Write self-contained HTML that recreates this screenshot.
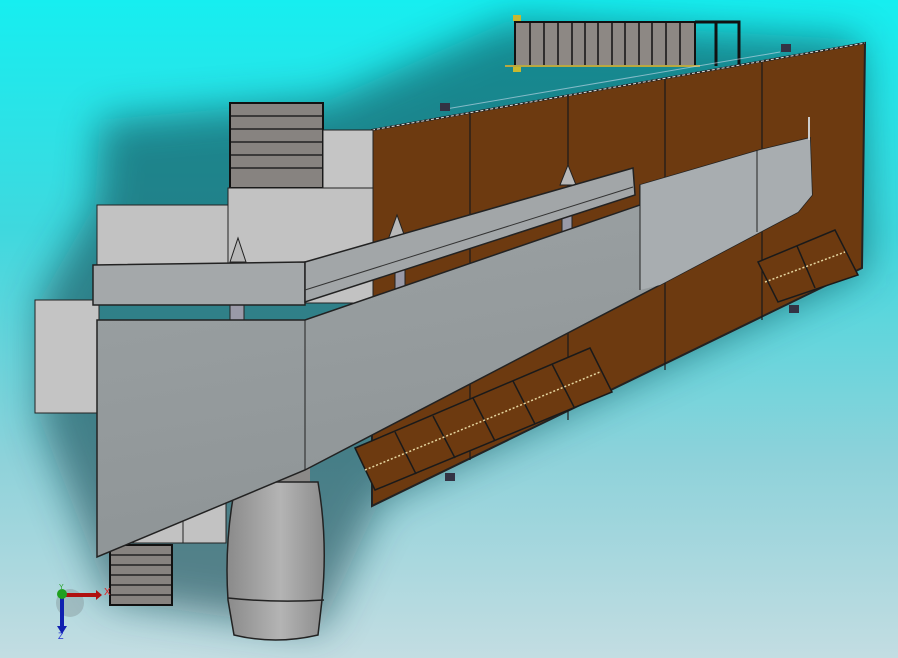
<!DOCTYPE html>
<html><head><style>
html,body{margin:0;padding:0;width:898px;height:658px;overflow:hidden}
body{background:linear-gradient(180deg,#16eef0 0%,#3fd8de 35%,#8ed2da 70%,#c3dde2 100%)}
</style></head><body>
<svg width="898" height="658" viewBox="0 0 898 658" xmlns="http://www.w3.org/2000/svg" style="position:absolute;left:0;top:0">
<defs>
<filter id="b" x="-30%" y="-30%" width="160%" height="160%"><feGaussianBlur stdDeviation="20"/></filter>
<linearGradient id="eng" x1="0" x2="1"><stop offset="0" stop-color="#8a8a8a"/><stop offset=".55" stop-color="#b4b4b4"/><stop offset="1" stop-color="#8c8c8c"/></linearGradient>
<linearGradient id="wing" x1="0" y1="0" x2="0.3" y2="1"><stop offset="0" stop-color="#9ea4a6"/><stop offset="1" stop-color="#8e9496"/></linearGradient>
</defs>
<!-- shadow -->
<g filter="url(#b)" opacity=".55">
<polygon points="100,120 330,100 510,20 860,40 865,270 380,500 320,630 110,600 40,420 40,300 95,205" fill="#0c3a44"/>
</g>
<!-- top gangway -->
<rect x="515" y="22" width="180" height="44" fill="#8d8884" stroke="#111" stroke-width="2"/>
<g stroke="#111" stroke-width="1.5">
<line x1="530" y1="23" x2="530" y2="65"/><line x1="544" y1="23" x2="544" y2="65"/><line x1="558" y1="23" x2="558" y2="65"/><line x1="572" y1="23" x2="572" y2="65"/><line x1="585" y1="23" x2="585" y2="65"/><line x1="598" y1="23" x2="598" y2="65"/><line x1="612" y1="23" x2="612" y2="65"/><line x1="625" y1="23" x2="625" y2="65"/><line x1="639" y1="23" x2="639" y2="65"/><line x1="652" y1="23" x2="652" y2="65"/><line x1="666" y1="23" x2="666" y2="65"/><line x1="680" y1="23" x2="680" y2="65"/>
</g>
<path d="M695 22 H739 V66 M716 22 V66" fill="none" stroke="#111" stroke-width="3"/>
<rect x="513" y="15" width="8" height="6" fill="#c8b830"/><rect x="513" y="66" width="8" height="6" fill="#c8b830"/>
<line x1="505" y1="66" x2="700" y2="66" stroke="#b8a840" stroke-width="2"/>
<!-- brown deck -->
<polygon points="372,130 865,43 862,268 372,506" fill="#6d3a10" stroke="#222" stroke-width="2"/>
<polyline points="372,130 865,43" fill="none" stroke="#ddd" stroke-width="1" stroke-dasharray="3,2"/>
<g stroke="#1a1a1a" stroke-width="1.2">
<line x1="470" y1="113" x2="470" y2="460"/><line x1="568" y1="96" x2="568" y2="420"/><line x1="665" y1="79" x2="665" y2="370"/><line x1="762" y1="62" x2="762" y2="320"/>
</g>
<line x1="440" y1="110" x2="780" y2="52" stroke="#cde" stroke-width="1" opacity=".6"/>
<!-- upper left stairs -->
<rect x="230" y="103" width="93" height="85" fill="#878380" stroke="#111" stroke-width="2"/>
<g stroke="#222" stroke-width="1.5"><line x1="231" y1="116" x2="322" y2="116"/><line x1="231" y1="129" x2="322" y2="129"/><line x1="231" y1="142" x2="322" y2="142"/><line x1="231" y1="155" x2="322" y2="155"/><line x1="231" y1="168" x2="322" y2="168"/></g>
<!-- gray blocks -->
<rect x="323" y="130" width="50" height="60" fill="#c5c5c5" stroke="#222"/>
<rect x="228" y="188" width="145" height="115" fill="#c2c2c2" stroke="#222"/>
<rect x="97" y="205" width="131" height="100" fill="#c2c2c2" stroke="#222"/>
<rect x="35" y="300" width="64" height="113" fill="#c4c4c4" stroke="#222"/>
<!-- posts -->
<rect x="395" y="260" width="10" height="40" fill="#9a9aa8" stroke="#222"/>
<rect x="562" y="205" width="10" height="35" fill="#9a9aa8" stroke="#222"/>
<rect x="230" y="300" width="14" height="20" fill="#9a9aa8" stroke="#222"/>
<!-- fins -->
<path d="M388 240 L397 215 L406 240 Z" fill="#b8b8b8" stroke="#222"/>
<path d="M560 185 L568 165 L576 185 Z" fill="#b8b8b8" stroke="#222"/>
<path d="M230 262 L238 238 L246 262 Z" fill="#b8b8b8" stroke="#222"/>
<!-- plank -->
<polygon points="93,265 305,262 305,305 93,305" fill="#a4a8aa" stroke="#222" stroke-width="1.5"/>
<polygon points="305,262 633,168 635,195 305,302" fill="#a2a6a8" stroke="#222" stroke-width="1.5"/>
<line x1="305" y1="290" x2="633" y2="187" stroke="#333"/>
<!-- bottom stairs -->
<rect x="110" y="545" width="62" height="60" fill="#878380" stroke="#111" stroke-width="2"/>
<g stroke="#222" stroke-width="1.5"><line x1="111" y1="555" x2="171" y2="555"/><line x1="111" y1="565" x2="171" y2="565"/><line x1="111" y1="575" x2="171" y2="575"/><line x1="111" y1="585" x2="171" y2="585"/><line x1="111" y1="595" x2="171" y2="595"/></g>
<rect x="130" y="480" width="96" height="63" fill="#c2c2c2" stroke="#222"/>
<line x1="183" y1="480" x2="183" y2="543" stroke="#222"/>
<!-- engine -->
<rect x="265" y="455" width="45" height="40" fill="#8c8a88"/>
<path d="M236 482 H318 Q328 540 322 600 L318 635 Q275 645 234 635 L228 600 Q224 540 236 482 Z" fill="url(#eng)" stroke="#222" stroke-width="1.5"/>
<path d="M228 598 Q275 603 324 600" fill="none" stroke="#222" stroke-width="1.5"/>
<!-- main wing -->
<polygon points="97,320 305,320 640,205 640,185 760,150 810,138 812,195 798,212 660,285 305,470 97,557" fill="url(#wing)" stroke="#222" stroke-width="1.5"/>
<polygon points="640,185 760,150 810,138 812,195 798,212 660,285 640,290" fill="#a8adb0"/>
<line x1="640" y1="185" x2="640" y2="290" stroke="#222"/>
<line x1="757" y1="150" x2="757" y2="232" stroke="#222"/>
<line x1="305" y1="320" x2="305" y2="470" stroke="#222"/>
<line x1="809" y1="117" x2="809" y2="140" stroke="#ccc" stroke-width="2"/>
<!-- lower cages -->
<g fill="#6d3a10" stroke="#1a1a1a" stroke-width="1.5">
<polygon points="355,448 590,348 612,392 375,490"/>
<polygon points="758,262 835,230 858,275 778,302"/>
</g>
<g stroke="#1a1a1a" stroke-width="1.5" fill="none">
<line x1="395" y1="432" x2="416" y2="474"/><line x1="433" y1="416" x2="455" y2="458"/><line x1="473" y1="398" x2="495" y2="441"/><line x1="513" y1="381" x2="535" y2="424"/><line x1="552" y1="364" x2="574" y2="407"/>
<line x1="365" y1="470" x2="600" y2="372" stroke="#e6d6a0" stroke-dasharray="2,2"/>
<line x1="797" y1="246" x2="815" y2="288"/>
<line x1="765" y1="282" x2="845" y2="252" stroke="#e6d6a0" stroke-dasharray="2,2"/>
</g>
<rect x="445" y="473" width="10" height="8" fill="#334" /><rect x="789" y="305" width="10" height="8" fill="#334"/>
<rect x="440" y="103" width="10" height="8" fill="#334"/><rect x="781" y="44" width="10" height="8" fill="#334"/>
<!-- axis triad -->
<circle cx="70" cy="603" r="14" fill="#8a9ea2" opacity=".5"/>
<line x1="62" y1="595" x2="96" y2="595" stroke="#b01010" stroke-width="4"/>
<polygon points="96,590 102,595 96,600" fill="#b01010"/>
<line x1="62" y1="595" x2="62" y2="628" stroke="#1020b0" stroke-width="4"/>
<polygon points="57,626 62,634 67,626" fill="#1020b0"/>
<circle cx="62" cy="594" r="5" fill="#20a020"/>
<text x="104" y="595" font-family="Liberation Sans, sans-serif" font-size="10" fill="#e02020">X</text>
<text x="58" y="639" font-family="Liberation Sans, sans-serif" font-size="9" fill="#2030d0">Z</text>
<text x="59" y="589" font-family="Liberation Sans, sans-serif" font-size="7" fill="#20a020">Y</text>
</svg>
</body></html>
